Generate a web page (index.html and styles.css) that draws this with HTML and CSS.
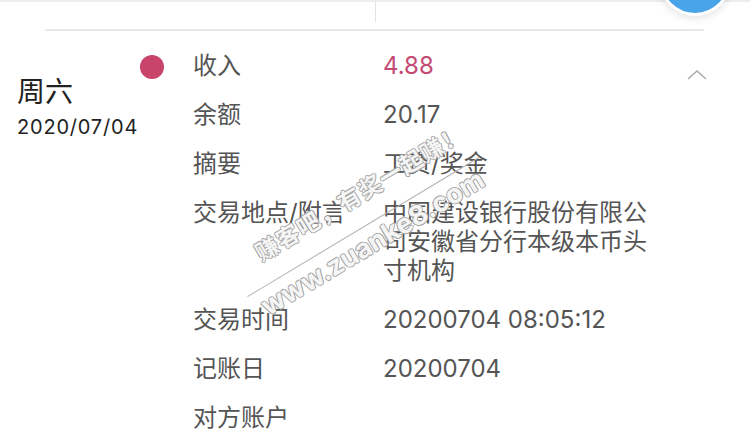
FILE: index.html
```html
<!DOCTYPE html>
<html lang="zh-CN">
<head>
  <meta charset="UTF-8">
  <meta name="viewport" content="width=device-width, initial-scale=1.0">
  <title>交易明细</title>
  <link rel="stylesheet" href="styles.css">
</head>
<body>
  <div class="topbar">
    <div class="topbar-left"></div>
    <div class="fab"></div>
  </div>
  <div class="rule"></div>

  <div class="entry">
    <div class="day">
      <div class="weekday">周六</div>
      <div class="date">2020/07/04</div>
    </div>
    <div class="dot-col"><span class="dot"></span></div>
    <div class="details">
      <div class="label">收入</div>
      <div class="value income">4.88</div>
      <div class="label">余额</div>
      <div class="value">20.17</div>
      <div class="label">摘要</div>
      <div class="value">工资/奖金</div>
      <div class="label">交易地点/附言</div>
      <div class="value">中国建设银行股份有限公司安徽省分行本级本币头寸机构</div>
      <div class="label">交易时间</div>
      <div class="value">20200704 08:05:12</div>
      <div class="label">记账日</div>
      <div class="value">20200704</div>
      <div class="label">对方账户</div>
      <div class="value"></div>
    </div>
    <div class="toggle">
      <svg width="20" height="12" viewBox="0 0 20 12"><polyline points="1,10 10,2 19,10" fill="none" stroke="#a8a8a8" stroke-width="1.4"/></svg>
    </div>
  </div>

  <!-- watermark from the forum screenshot -->
  <div class="watermark">
    <div class="wm-line">赚客吧，有奖一起赚！</div>
    <div class="wm-line wm-url">www.zuanke8.com</div>
  </div>
</body>
</html>
```

FILE: styles.css
```css
body {
  margin: 0;
  font-family: Inter, "Noto Sans CJK SC", sans-serif;
  background: #fff;
  color: #222;
  overflow: hidden;
}

.topbar {
  position: relative;
  height: 27px;
  border-top: 2px solid #ededed;
}

.topbar-left {
  width: 375px;
  height: 20px;
  border-right: 1px solid #e4e4e4;
}

/* floating blue button, cut off at the top */
.fab {
  position: absolute;
  left: 659px;
  top: -58px;
  width: 66px;
  height: 66px;
  border-radius: 50%;
  background: #4aa4ea;
  border: 3px solid #fff;
  box-shadow: 0 2px 8px rgba(0, 0, 0, 0.12);
}

.rule {
  margin: 0 46px 0 45px;
  height: 2px;
  background: #e8e8e8;
}

.entry {
  display: flex;
  padding: 20px 0 0 17px;
}

.day {
  width: 123px;
  padding-top: 23px;
}

.weekday {
  font-size: 28px;
  line-height: 36px;
}

.date {
  font-size: 20px;
  line-height: 34px;
  letter-spacing: 0.8px;
}

.dot-col {
  width: 53px;
  padding-top: 4px;
}

.dot {
  display: block;
  width: 24px;
  height: 24px;
  border-radius: 50%;
  background: #c9446a;
}

.details {
  display: grid;
  grid-template-columns: 190px 275px;
  row-gap: 20px;
  font-size: 24px;
  line-height: 29px;
  color: #555;
}

.income {
  color: #c44a74;
}

.toggle {
  margin-left: auto;
  padding: 14px 43px 0 0;
}

.watermark {
  position: absolute;
  left: 222px;
  top: 168px;
  width: 300px;
  transform: rotate(-31deg);
  text-align: center;
  pointer-events: none;
}

.wm-line {
  font-size: 23px;
  line-height: 44px;
  letter-spacing: 1px;
  font-weight: bold;
  color: #f5f5f5;
  text-shadow: 1px 0 0 #a0a0a0, -1px 0 0 #a0a0a0, 0 1px 0 #a0a0a0, 0 -1px 0 #a0a0a0;
}

.wm-url {
  font-size: 27px;
  line-height: 36px;
  letter-spacing: 0;
  margin: 8px 30px 0 0;
  border-top: 1px solid #b0b0b0;
}
```
